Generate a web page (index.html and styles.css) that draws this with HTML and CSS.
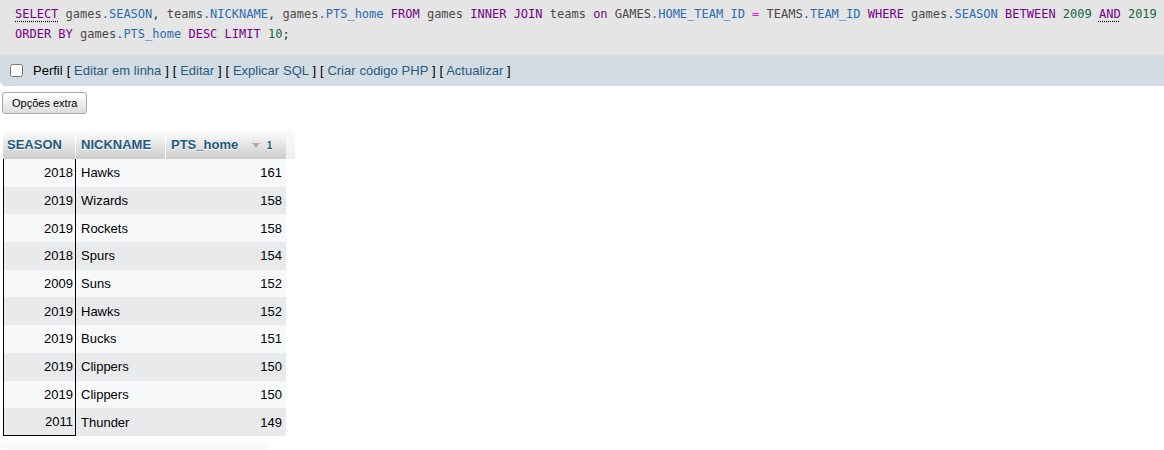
FILE: index.html
```html
<!DOCTYPE html>
<html lang="pt">
<head>
<meta charset="utf-8">
<title>SQL</title>
<link rel="stylesheet" href="styles.css">
</head>
<body>
<div class="sql"><code><span class="kw doc">SELECT</span> <span class="id">games</span><span class="col">.SEASON</span><span class="pn">,</span> <span class="id">teams</span><span class="col">.NICKNAME</span><span class="pn">,</span> <span class="id">games</span><span class="col">.PTS_home</span> <span class="kw">FROM</span> <span class="id">games</span> <span class="kw">INNER</span> <span class="kw">JOIN</span> <span class="id">teams</span> <span class="kw">on</span> <span class="id">GAMES</span><span class="col">.HOME_TEAM_ID</span> <span class="op">=</span> <span class="id">TEAMS</span><span class="col">.TEAM_ID</span> <span class="kw">WHERE</span> <span class="id">games</span><span class="col">.SEASON</span> <span class="kw">BETWEEN</span> <span class="num">2009</span> <span class="kw doc">AND</span> <span class="num">2019</span> <span class="kw">ORDER</span> <span class="kw">BY</span> <span class="id">games</span><span class="col">.PTS_home</span> <span class="kw">DESC</span> <span class="kw">LIMIT</span> <span class="num">10</span><span class="pn">;</span></code></div>
<div class="toolbar">
  <input type="checkbox" class="chk" id="perfil"><label for="perfil" class="lbl">Perfil</label>
  <span class="links">[ <a href="#">Editar em linha</a> ] [ <a href="#">Editar</a> ] [ <a href="#">Explicar SQL</a> ] [ <a href="#">Criar código PHP</a> ] [ <a href="#">Actualizar</a> ]</span>
</div>
<div class="extra"><button class="btn" type="button">Opções extra</button></div>
<table class="data">
  <thead>
    <tr>
      <th class="c1">SEASON</th>
      <th class="c2">NICKNAME</th>
      <th class="c3">PTS_home <span class="sort"><span class="tri"></span>1</span></th>
      <th class="c4"></th>
    </tr>
  </thead>
  <tbody>
    <tr class="odd"><td class="num c1">2018</td><td>Hawks</td><td class="num">161</td></tr>
    <tr class="even"><td class="num c1">2019</td><td>Wizards</td><td class="num">158</td></tr>
    <tr class="odd"><td class="num c1">2019</td><td>Rockets</td><td class="num">158</td></tr>
    <tr class="even"><td class="num c1">2018</td><td>Spurs</td><td class="num">154</td></tr>
    <tr class="odd"><td class="num c1">2009</td><td>Suns</td><td class="num">152</td></tr>
    <tr class="even"><td class="num c1">2019</td><td>Hawks</td><td class="num">152</td></tr>
    <tr class="odd"><td class="num c1">2019</td><td>Bucks</td><td class="num">151</td></tr>
    <tr class="even"><td class="num c1">2019</td><td>Clippers</td><td class="num">150</td></tr>
    <tr class="odd"><td class="num c1">2019</td><td>Clippers</td><td class="num">150</td></tr>
    <tr class="even last"><td class="num c1">2011</td><td>Thunder</td><td class="num">149</td></tr>
  </tbody>
</table>
<div class="shadow"></div>
</body>
</html>
```

FILE: styles.css
```css
html, body {
  margin: 0;
  padding: 0;
  background: #fff;
  font-family: "Liberation Sans", Arial, sans-serif;
  color: #000;
}

.sql {
  background: #e5e5e5;
  padding: 4px 5px 11px 15px;
  font-family: "DejaVu Sans Mono", monospace;
  font-size: 12px;
  line-height: 20px;
  color: #444;
}
.sql code { font-family: inherit; }
.kw { color: #770088; }
.id { color: #4a4a4a; }
.col { color: #2a6db3; }
.num { color: #116644; }
.op { color: #ff00ff; }
.pn { color: #333; }
.doc {
  text-decoration: underline dotted #000;
  text-underline-offset: 3px;
}

.toolbar {
  background: #d3dce3;
  height: 31px;
  display: flex;
  align-items: center;
  padding-left: 10px;
  border-bottom-left-radius: 6px;
  font-size: 13px;
  box-sizing: border-box;
}
.chk {
  margin: 0 10px 0 0;
  width: 13px;
  height: 13px;
}
.lbl { margin-right: 4px; }
.links { word-spacing: 0.25px; }
.links a {
  color: #235a81;
  text-decoration: none;
}

.extra {
  padding: 6px 0 0 2px;
}
.btn {
  font-family: "Liberation Sans", Arial, sans-serif;
  font-size: 11px;
  height: 22px;
  padding: 0 9px;
  border: 1px solid #aaa;
  border-radius: 3px;
  background: linear-gradient(#ffffff, #dddddd);
  color: #000;
}

.data {
  margin: 16px 0 0 3px;
  border-collapse: separate;
  border-spacing: 0;
  font-size: 13px;
}
.data th {
  height: 29px;
  box-sizing: border-box;
  padding: 0 4px 0 4px;
  text-align: left;
  font-weight: bold;
  color: #235a81;
  background: linear-gradient(#ffffff, #cccccc);
  border-right: 1px solid #fff;
  text-shadow: 0 1px 0 #fff;
  white-space: nowrap;
}
.data th.c2, .data th.c3 { padding-left: 5px; }
.data th.c1 { width: 73px; }
.data th.c2 { width: 90px; }
.data th.c3 { width: 120px; border-right: 0; }
.data th.c4 {
  width: 9px;
  padding: 0;
  background: linear-gradient(#fafafa, #f0f0f0);
  border-right: 0;
}
.sort {
  margin-left: 10px;
  font-size: 10px;
  color: #235a81;
}
.tri {
  display: inline-block;
  width: 0;
  height: 0;
  border-left: 4px solid transparent;
  border-right: 4px solid transparent;
  border-top: 5px solid #aaa;
  margin-right: 7px;
  vertical-align: 1px;
}
.data td {
  height: 27.7px;
  box-sizing: border-box;
  padding: 0 4px 0 5px;
  color: #000;
}
.data td.num { text-align: right; color: #000; }
.data td.c1 {
  border-left: 1px solid #000;
  border-right: 1px solid #000;
  padding-right: 2px;
}
.data tr.last td.c1 { border-bottom: 1px solid #000; }
.data tr.odd td { background: #f7f8f9; }
.data tr.even td { background: #e9eaec; }

.shadow {
  margin-top: 7px;
  width: 270px;
  height: 6px;
  background: linear-gradient(#ffffff, #eeeeee);
  filter: blur(2px);
}
```
